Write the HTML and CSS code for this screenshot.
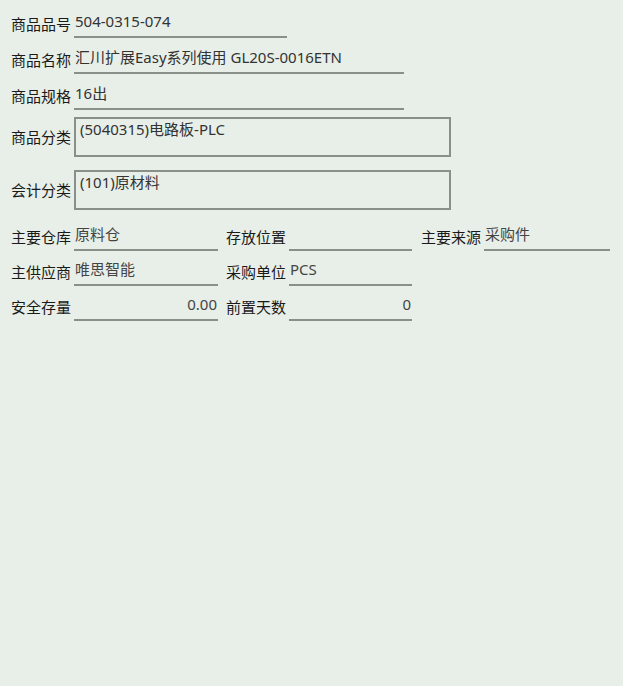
FILE: index.html
```html
<!DOCTYPE html>
<html lang="zh-CN">
<head>
    <meta charset="UTF-8">
    <meta name="viewport" content="width=device-width, initial-scale=1.0">
    <title>商品资料</title>
    <link rel="stylesheet" href="styles.css">
</head>
<body>

<div class="item-form">
    <div class="row">
        <span class="label">商品品号</span>
        <div class="field w-short">504-0315-074</div>
    </div>

    <div class="row">
        <span class="label">商品名称</span>
        <div class="field w-long">汇川扩展Easy系列使用 GL20S-0016ETN</div>
    </div>

    <div class="row">
        <span class="label">商品规格</span>
        <div class="field w-long">16出</div>
    </div>

    <div class="row row-box first-box">
        <span class="label">商品分类</span>
        <div class="box">(5040315)电路板-PLC</div>
    </div>

    <div class="row row-box">
        <span class="label">会计分类</span>
        <div class="box">(101)原材料</div>
    </div>

    <div class="row row-grid first-grid">
        <div class="group g1">
            <span class="label">主要仓库</span>
            <div class="field soft">原料仓</div>
        </div>
        <div class="group g2">
            <span class="label">存放位置</span>
            <div class="field soft"></div>
        </div>
        <div class="group g3">
            <span class="label">主要来源</span>
            <div class="field soft">采购件</div>
        </div>
    </div>

    <div class="row row-grid">
        <div class="group g1">
            <span class="label">主供应商</span>
            <div class="field soft">唯思智能</div>
        </div>
        <div class="group g2">
            <span class="label">采购单位</span>
            <div class="field soft">PCS</div>
        </div>
    </div>

    <div class="row row-grid">
        <div class="group g1">
            <span class="label">安全存量</span>
            <div class="field soft num">0.00</div>
        </div>
        <div class="group g2">
            <span class="label">前置天数</span>
            <div class="field soft num">0</div>
        </div>
    </div>
</div>

</body>
</html>
```

FILE: styles.css
```css
* {
    margin: 0;
    padding: 0;
    box-sizing: border-box;
}

body {
    font-family: "Noto Sans", "Noto Sans CJK SC", sans-serif;
    background-color: #e8efe8;
    color: #222;
    height: 100vh;
}

.item-form {
    padding: 10px 0 0 11px;
}

.row {
    display: flex;
    align-items: center;
    height: 28px;
    margin-bottom: 8px;
}

.label {
    width: 60px;
    margin-right: 3px;
    font-size: 15px;
    line-height: 20px;
    color: #1a1a1a;
    white-space: nowrap;
}

.field {
    height: 28px;
    padding: 1px 1px 0 1px;
    border-bottom: 2px solid #8a8f8a;
    font-size: 15px;
    line-height: 20px;
    color: #333;
    white-space: nowrap;
}

.w-short {
    width: 213px;
}

.w-long {
    width: 330px;
}

/* multi-line boxes */
.row-box {
    height: 40px;
    margin-bottom: 13px;
}

.first-box {
    margin-top: -1px;
}

.box {
    width: 377px;
    height: 40px;
    border: 2px solid #8a8f8a;
    padding: 0 4px;
    font-size: 15px;
    line-height: 20px;
    color: #333;
}

/* three-column part */
.row-grid {
    margin-bottom: 7px;
}

.first-grid {
    margin-top: 2px;
}

.group {
    display: flex;
    align-items: center;
}

.group .label {
    margin-right: 3px;
}

.g1 .field {
    width: 144px;
}

.g2 {
    margin-left: 8px;
}

.g2 .field {
    width: 123px;
}

.g3 .field {
    width: 126px;
}

.g3 {
    margin-left: 9px;
}

.soft {
    color: #444;
}

.num {
    text-align: right;
}
```
